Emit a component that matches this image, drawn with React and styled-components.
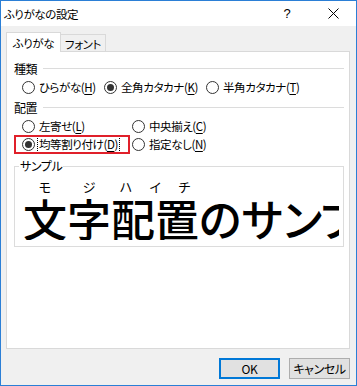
import React from 'react'
import { styled, createGlobalStyle } from 'styled-components'

const GlobalStyle = createGlobalStyle`
  html, body {
    margin: 0;
    padding: 0;
    background: #ffffff;
  }
  body {
    font-family: "Noto Sans CJK JP", "Noto Sans", sans-serif;
    font-size: 12px;
    color: #000;
  }
`;

const ui = `
  font-family: "Noto Sans CJK JP", "Noto Sans", sans-serif;
  font-feature-settings: "palt" 1;
  letter-spacing: -0.4px;
`;

const Dialog = () => {
  return (
    <Window>
      <TitleBar>
        <Title>ふりがなの設定</Title>
        <CaptionButton>?</CaptionButton>
        <CaptionButton>
          <svg width="11" height="11" viewBox="0 0 11 11">
            <path d="M0.5 0.5 L10.5 10.5 M10.5 0.5 L0.5 10.5" stroke="#000" strokeWidth="1" fill="none" />
          </svg>
        </CaptionButton>
      </TitleBar>

      <Body>
        <TabStrip>
          <Tab $active>ふりがな</Tab>
          <Tab>フォント</Tab>
        </TabStrip>

        <Panel>
          <Heading>種類</Heading>
          <OptionRow $cols="82px 102px auto">
            <Option>
              <Radio />
              <span>ひらがな(<U>H</U>)</span>
            </Option>
            <Option>
              <Radio $checked />
              <span>全角カタカナ(<U>K</U>)</span>
            </Option>
            <Option>
              <Radio />
              <span>半角カタカナ(<U>T</U>)</span>
            </Option>
          </OptionRow>

          <Heading>配置</Heading>
          <OptionRow $cols="110px auto">
            <Option>
              <Radio />
              <span>左寄せ(<U>L</U>)</span>
            </Option>
            <Option>
              <Radio />
              <span>中央揃え(<U>C</U>)</span>
            </Option>
            <Option $marked>
              <Radio $checked />
              <FocusText>均等割り付け(<U>D</U>)</FocusText>
            </Option>
            <Option>
              <Radio />
              <span>指定なし(<U>N</U>)</span>
            </Option>
          </OptionRow>

          <SampleBox>
            <legend>サンプル</legend>
            <SampleClip>
              <Word>
                <Ruby>
                  <span>モ</span>
                </Ruby>
                <Base>文</Base>
              </Word>
              <Word>
                <Ruby>
                  <span>ジ</span>
                </Ruby>
                <Base>字</Base>
              </Word>
              <Word>
                <Ruby>
                  <span>ハ</span>
                  <span>イ</span>
                  <span>チ</span>
                </Ruby>
                <Base>配置</Base>
              </Word>
              <Word>
                <Ruby />
                <Base>のサンプル</Base>
              </Word>
            </SampleClip>
          </SampleBox>
        </Panel>

        <Footer>
          <Button $default>OK</Button>
          <Button>キャンセル</Button>
        </Footer>
      </Body>
    </Window>
  );
}

const Window = styled.div`
  width: 357px;
  height: 386px;
  box-sizing: border-box;
  border: 1px solid #2b7fd6;
  display: flex;
  flex-direction: column;
  background: #f0f0f0;
  ${ui}
`;

const TitleBar = styled.div`
  height: 25px;
  background: #ffffff;
  display: flex;
  align-items: center;
  padding-left: 3px;
`;

const Title = styled.div`
  flex: 1;
  font-size: 11.5px;
  line-height: 16px;
`;

const CaptionButton = styled.div`
  width: 46px;
  height: 25px;
  display: flex;
  align-items: center;
  justify-content: center;
  font-family: "Liberation Sans", sans-serif;
  font-size: 13px;
  letter-spacing: 0;
`;

const Body = styled.div`
  flex: 1;
  display: flex;
  flex-direction: column;
  padding: 0 6px 0 5px;
`;

const TabStrip = styled.div`
  display: flex;
  align-items: flex-end;
  margin-top: 6px;
  margin-bottom: -1px;
  position: relative;
  z-index: 1;
`;

const Tab = styled.div`
  box-sizing: border-box;
  border: 1px solid #d9d9d9;
  border-bottom: none;
  display: flex;
  align-items: center;
  justify-content: center;
  font-size: 11.5px;
  width: ${({ $active }) => ($active ? '55px' : '46px')};
  height: ${({ $active }) => ($active ? '20px' : '17px')};
  margin-bottom: ${({ $active }) => ($active ? '0' : '1px')};
  margin-left: ${({ $active }) => ($active ? '0' : '-1px')};
  background: ${({ $active }) => ($active ? '#ffffff' : '#f0f0f0')};
  padding-top: ${({ $active }) => ($active ? '0' : '1px')};
`;

const Panel = styled.div`
  box-sizing: border-box;
  height: 298px;
  background: #ffffff;
  border: 1px solid #d9d9d9;
  padding: 8px 5px 0 7px;
  display: flex;
  flex-direction: column;
`;

const Heading = styled.div`
  display: flex;
  align-items: center;
  height: 16px;
  font-size: 12px;
  margin-bottom: 2px;

  &::after {
    content: "";
    flex: 1;
    height: 1px;
    margin-left: 6px;
    background: #dcdcdc;
  }
`;

const OptionRow = styled.div`
  display: grid;
  grid-template-columns: ${({ $cols }) => $cols};
  grid-auto-rows: 18px;
  padding-left: 8px;
  margin-bottom: 3px;
`;

const Option = styled.label`
  position: relative;
  display: flex;
  align-items: center;
  gap: 4px;
  font-size: 11.5px;
  white-space: nowrap;

  ${({ $marked }) =>
    $marked &&
    `
    &::after {
      content: "";
      position: absolute;
      left: -8px;
      top: 0;
      width: 116px;
      height: 19px;
      box-sizing: border-box;
      border: 2px solid #e0202a;
      pointer-events: none;
    }
  `}
`;

const Radio = styled.span`
  width: 13px;
  height: 13px;
  box-sizing: border-box;
  border: 1px solid #333333;
  border-radius: 50%;
  background: #ffffff;
  display: flex;
  align-items: center;
  justify-content: center;
  flex-shrink: 0;

  &::after {
    content: "";
    display: ${({ $checked }) => ($checked ? 'block' : 'none')};
    width: 7px;
    height: 7px;
    border-radius: 50%;
    background: #333333;
  }
`;

const FocusText = styled.span`
  outline: 1px dotted #000;
  outline-offset: 0;
  padding: 0 1px;
  margin-left: -1px;
  line-height: 15px;
`;

const U = styled.span`
  text-decoration: underline;
  text-underline-offset: 2px;
`;

const SampleBox = styled.fieldset`
  margin: 3px 0 0 0;
  border: 1px solid #dcdcdc;
  padding: 6px 4px 4px 4px;
  min-width: 0;
  height: 88px;
  box-sizing: border-box;

  legend {
    padding: 0 1px;
    font-size: 12px;
    line-height: 14px;
  }
`;

const SampleClip = styled.div`
  display: flex;
  overflow: hidden;
  margin-left: 4px;
  white-space: nowrap;
  letter-spacing: 0;
`;

const Word = styled.div`
  display: flex;
  flex-direction: column;
  flex-shrink: 0;
`;

const Ruby = styled.div`
  display: flex;
  justify-content: space-around;
  height: 15px;
  font-size: 13px;
  line-height: 15px;
  margin-bottom: 2px;
`;

const Base = styled.div`
  font-size: 44px;
  line-height: 44px;
  font-weight: 500;
`;

const Footer = styled.div`
  display: flex;
  justify-content: flex-end;
  gap: 9px;
  margin-top: 9px;
`;

const Button = styled.div`
  box-sizing: border-box;
  width: 61px;
  height: 21px;
  display: flex;
  align-items: center;
  justify-content: center;
  font-size: 12px;
  background: #e1e1e1;
  border: ${({ $default }) => ($default ? '2px solid #0078d7' : '1px solid #adadad')};
`;

const App = () => (
  <>
    <GlobalStyle />
    <Dialog />
  </>
);

export default App
